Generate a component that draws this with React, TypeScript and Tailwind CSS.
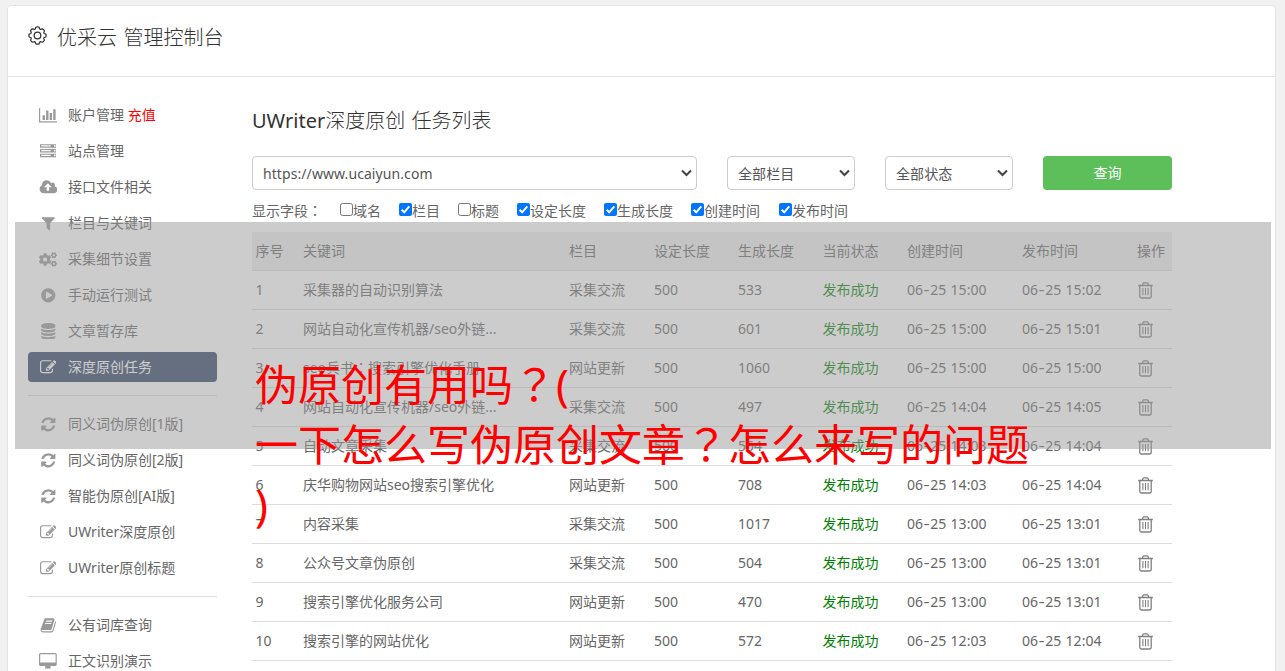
import React from "react";
import { FaCogs } from "react-icons/fa";

type IconDef = { w: number; h?: number; d: string };

const ICONS: Record<string, IconDef> = {
  chart: { w: 2048, d: "M640 896v512h-256v-512h256zm384-512v1024h-256v-1024h256zm1024 1152v128h-2048v-1536h128v1408h1920zm-640-896v768h-256v-768h256zm384-384v1152h-256v-1152h256z" },
  server: { w: 1792, d: "M128 1408h1024v-128h-1024v128zm0-512h1024v-128h-1024v128zm1568 448q0-40-28-68t-68-28-68 28-28 68 28 68 68 28 68-28 28-68zm-1568-960h1024v-128h-1024v128zm1568 448q0-40-28-68t-68-28-68 28-28 68 28 68 68 28 68-28 28-68zm0-512q0-40-28-68t-68-28-68 28-28 68 28 68 68 28 68-28 28-68zm96 832v384h-1792v-384h1792zm0-512v384h-1792v-384h1792zm0-512v384h-1792v-384h1792z" },
  upload: { w: 2048, d: "M1344 864q0-14-9-23l-352-352q-9-9-23-9t-23 9l-351 351q-10 12-10 24 0 14 9 23t23 9h224v352q0 13 9.5 22.5t22.5 9.5h192q13 0 22.5-9.5t9.5-22.5v-352h224q13 0 22.5-9.5t9.5-22.5zm640 288q0 159-112.5 271.5t-271.5 112.5h-1088q-185 0-316.5-131.5t-131.5-316.5q0-130 70-240t188-165q-2-30-2-43 0-212 150-362t362-150q156 0 285.5 87t188.5 231q71-62 166-62 106 0 181 75t75 181q0 76-41 138 130 31 213.5 135.5t83.5 238.5z" },
  filter: { w: 1792, d: "M1595 295q17 41-14 70l-493 493v742q0 42-39 59-13 5-25 5-27 0-45-19l-256-256q-19-19-19-45v-486l-493-493q-31-29-14-70 17-39 59-39h1280q42 0 59 39z" },
  play: { w: 1792, d: "M896 128q209 0 385.5 103t279.5 279.5 103 385.5-103 385.5-279.5 279.5-385.5 103-385.5-103-279.5-279.5-103-385.5 103-385.5 279.5-279.5 385.5-103zm384 823q32-18 32-55t-32-55l-544-320q-31-19-64-1-32 19-32 56v640q0 37 32 56 16 8 32 8 17 0 32-9z" },
  database: { w: 1792, d: "M896 768q237 0 443-43t325-127v170q0 69-103 128t-280 93.5-385 34.5-385-34.5-280-93.5-103-128v-170q119 84 325 127t443 43zm0 768q237 0 443-43t325-127v170q0 69-103 128t-280 93.5-385 34.5-385-34.5-280-93.5-103-128v-170q119 84 325 127t443 43zm0-384q237 0 443-43t325-127v170q0 69-103 128t-280 93.5-385 34.5-385-34.5-280-93.5-103-128v-170q119 84 325 127t443 43zm0-1152q208 0 385 34.5t280 93.5 103 128v128q0 69-103 128t-280 93.5-385 34.5-385-34.5-280-93.5-103-128v-128q0-69 103-128t280-93.5 385-34.5z" },
  edit: { w: 1792, d: "M888 1184l116-116-152-152-116 116v56h96v96h56zm440-720q-16-16-33 1l-350 350q-17 17-1 33t33-1l350-350q17-17 1-33zm80 594v190q0 119-84.5 203.5t-203.5 84.5h-832q-119 0-203.5-84.5t-84.5-203.5v-832q0-119 84.5-203.5t203.5-84.5h832q63 0 117 25 15 7 18 23 3 17-9 29l-49 49q-14 14-32 8-23-6-45-6h-832q-66 0-113 47t-47 113v832q0 66 47 113t113 47h832q66 0 113-47t47-113v-126q0-13 9-22l64-64q15-15 35-7t20 29zm-96-738l288 288-672 672h-288v-288zm444 132l-92 92-288-288 92-92q28-28 68-28t68 28l152 152q28 28 28 68t-28 68z" },
  refresh: { w: 1792, d: "M1639 1056q0 5-1 7-64 268-268 434.5t-478 166.5q-146 0-282.5-55t-243.5-157l-129 129q-19 19-45 19t-45-19-19-45v-448q0-26 19-45t45-19h448q26 0 45 19t19 45-19 45l-137 137q71 66 161 102t187 36q134 0 250-65t186-179q11-17 53-117 8-23 30-23h192q13 0 22.5 9.5t9.5 22.5zm25-800v448q0 26-19 45t-45 19h-448q-26 0-45-19t-19-45 19-45l138-138q-148-137-349-137-134 0-250 65t-186 179q-11 17-53 117-8 23-30 23h-199q-13 0-22.5-9.5t-9.5-22.5v-7q65-268 270-434.5t480-166.5q146 0 284 55.5t245 156.5l130-129q19-19 45-19t45 19 19 45z" },
  book: { w: 1792, d: "M1703 478q40 57 18 129l-275 906q-19 64-76.5 107.5t-122.5 43.5h-923q-77 0-148.5-53.5t-99.5-131.5q-24-67-2-127 0-4 3-27t4-37q1-8-3-21.5t-3-19.5q2-11 8-21t16.5-23.5 16.5-23.5q23-38 45-91.5t30-91.5q3-10 .5-30t-.5-28q3-11 17-28t17-23q21-36 42-92t25-90q1-9-2.5-32t.5-28q4-13 22-30.5t22-22.5q19-26 42.5-84.5t27.5-96.5q1-8-3-25.5t-2-26.5q2-8 9-18t18-23 17-21q8-12 16.5-30.5t15-35 16-36 19.5-32 26.5-23.5 36-11.5 47.5 5.5l-1 3q38-9 51-9h761q74 0 114 56t18 130l-274 906q-36 119-71.5 153.5t-128.5 34.5h-869q-27 0-38 15-11 16-1 43 24 70 144 70h923q29 0 56-15.5t35-41.5l300-987q7-22 5-57 38 15 59 43zm-1064 2q-4 13 2 22.5t20 9.5h608q13 0 25.5-9.5t16.5-22.5l21-64q4-13-2-22.5t-20-9.5h-608q-13 0-25.5 9.5t-16.5 22.5zm-83 256q-4 13 2 22.5t20 9.5h608q13 0 25.5-9.5t16.5-22.5l21-64q4-13-2-22.5t-20-9.5h-608q-13 0-25.5 9.5t-16.5 22.5z" },
  desktop: { w: 1920, d: "M1792 992v-832q0-13-9.5-22.5t-22.5-9.5h-1600q-13 0-22.5 9.5t-9.5 22.5v832q0 13 9.5 22.5t22.5 9.5h1600q13 0 22.5-9.5t9.5-22.5zm128-832v1088q0 66-47 113t-113 47h-544q0 37 16 77.5t32 71 16 43.5q0 26-19 45t-45 19h-512q-26 0-45-19t-19-45q0-14 16-44t32-70 16-78h-544q-66 0-113-47t-47-113v-1088q0-66 47-113t113-47h1600q66 0 113 47t47 113z" },
};

function NavIcon({ name }: { name: string }) {
  if (name === "cogs") return <FaCogs className="h-[17px] w-[18px]" />;
  const i = ICONS[name];
  return (
    <svg viewBox={`0 0 ${i.w} 1792`} width={i.w / 108} height={1792 / 108} fill="currentColor" className="shrink-0">
      <path d={i.d} />
    </svg>
  );
}

type NavItem = { icon: string; label: string; extra?: string; active?: boolean };

const NAV: NavItem[][] = [
  [
    { icon: "chart", label: "账户管理", extra: "充值" },
    { icon: "server", label: "站点管理" },
    { icon: "upload", label: "接口文件相关" },
    { icon: "filter", label: "栏目与关键词" },
    { icon: "cogs", label: "采集细节设置" },
    { icon: "play", label: "手动运行测试" },
    { icon: "database", label: "文章暂存库" },
    { icon: "edit", label: "深度原创任务", active: true },
  ],
  [
    { icon: "refresh", label: "同义词伪原创[1版]" },
    { icon: "refresh", label: "同义词伪原创[2版]" },
    { icon: "refresh", label: "智能伪原创[AI版]" },
    { icon: "edit", label: "UWriter深度原创" },
    { icon: "edit", label: "UWriter原创标题" },
  ],
  [
    { icon: "book", label: "公有词库查询" },
    { icon: "desktop", label: "正文识别演示" },
  ],
];

function Sidebar() {
  return (
    <nav className="mt-[20px] w-[189px] shrink-0">
      {NAV.map((group, g) => (
        <div key={g} className={g > 0 ? "mt-[10px] border-t border-[#ddd] pt-[10px]" : ""}>
          {group.map((n) => (
            <div key={n.label} className="flex h-9 items-center">
              <div className={`flex h-[30px] w-full items-center rounded-[4px] ${n.active ? "bg-[#334565] text-white" : "text-[#666]"}`}>
                <span className={`flex w-[40px] justify-center ${n.active ? "text-white" : "text-[#999]"}`}>
                  <NavIcon name={n.icon} />
                </span>
                <span className="whitespace-pre">
                  {n.label}
                  {n.extra && <span className="text-[#f00]"> {n.extra}</span>}
                </span>
              </div>
            </div>
          ))}
        </div>
      ))}
    </nav>
  );
}

function Select({ label, className }: { label: string; className: string }) {
  return (
    <div className={`flex h-[34px] items-center justify-between rounded-[4px] border border-[#ccc] bg-white pl-[10px] pr-[4px] text-[#555] ${className}`}>
      <span className="pt-px tracking-[0.08px]">{label}</span>
      <svg width="11" height="8" viewBox="0 0 11 8" fill="none" stroke="#444" strokeWidth="2">
        <path d="M1 1.5L5.5 6L10 1.5" />
      </svg>
    </div>
  );
}

const FIELDS: [string, boolean, string][] = [
  ["域名", false, "w-[59px]"],
  ["栏目", true, "w-[59px]"],
  ["标题", false, "w-[59px]"],
  ["设定长度", true, "w-[87px]"],
  ["生成长度", true, "w-[87px]"],
  ["创建时间", true, "w-[88px]"],
  ["发布时间", true, "w-[87px]"],
];

function Check({ on }: { on: boolean }) {
  return (
    <svg width="13" height="13" viewBox="0 0 13 13" className="mb-[3px] shrink-0">
      {on ? (
        <>
          <rect width="13" height="13" rx="2" fill="#0075ff" />
          <path d="M2.6 6.8L5.2 9.3L10.3 3.4" fill="none" stroke="#fff" strokeWidth="2" />
        </>
      ) : (
        <rect x="0.5" y="0.5" width="12" height="12" rx="2" fill="#fff" stroke="#767676" />
      )}
    </svg>
  );
}

const HEAD = ["序号", "关键词", "栏目", "设定长度", "生成长度", "当前状态", "创建时间", "发布时间", "操作"];

const ROWS: string[][] = [
  ["采集器的自动识别算法", "采集交流", "533", "15:00", "15:02"],
  ["网站自动化宣传机器/seo外链...", "采集交流", "601", "15:00", "15:01"],
  ["seo兵书：搜索引擎优化手册", "网站更新", "1060", "15:00", "15:00"],
  ["网站自动化宣传机器/seo外链...", "采集交流", "497", "14:04", "14:05"],
  ["自动文章采集", "采集交流", "554", "14:03", "14:04"],
  ["庆华购物网站seo搜索引擎优化", "网站更新", "708", "14:03", "14:04"],
  ["内容采集", "采集交流", "1017", "13:00", "13:01"],
  ["公众号文章伪原创", "采集交流", "504", "13:00", "13:01"],
  ["搜索引擎优化服务公司", "网站更新", "470", "13:00", "13:01"],
  ["搜索引擎的网站优化", "网站更新", "572", "12:03", "12:04"],
];

const GRID = "grid h-[39px] grid-cols-[47.5px_266px_85px_84px_84.5px_84.5px_115px_115px_35px] items-center border-b border-[#ddd] pl-[3.5px] whitespace-nowrap";

/* Full-width punctuation centred in its cell */
function Punct({ children }: { children: string }) {
  return (
    <span lang="zh-TW" className="font-['Noto_Sans_CJK_TC',sans-serif] leading-none">
      {children}
    </span>
  );
}

function Keyword({ text }: { text: string }) {
  const [a, b] = text.split("：");
  return (
    <span>
      {a}
      {b && <Punct>：</Punct>}
      {b}
    </span>
  );
}

function Stamp({ time }: { time: string }) {
  return (
    <span className="[word-spacing:0.8px]">
      06<span className="inline-block origin-center scale-x-[1.35] px-[1.3px]">-</span>25 {time}
    </span>
  );
}

function Trash() {
  return (
    <svg width="15" height="17" viewBox="0 0 15 17" fill="none" stroke="#808080" strokeWidth="1.3" className="ml-px">
      <path d="M0.2 3.5H14.8M4.3 3.3L5 1.4Q5.2 0.9 5.8 0.9H9.2Q9.8 0.9 10 1.4L10.7 3.3M1.8 3.6V14.6Q1.8 16 3.2 16H11.8Q13.2 16 13.2 14.6V3.6" />
      <path d="M4.9 6V13.2M7.5 6V13.2M10.1 6V13.2" strokeWidth="1.1" />
    </svg>
  );
}

function Gear() {
  return (
    <svg width="19" height="19" viewBox="0 0 19 19" fill="none" stroke="#333" strokeWidth="1.25" strokeLinejoin="round">
      <path d="M7.8 1.2Q9.5 .4 11.2 1.2L11.6 2.9Q12.3 3.5 13.2 3.1L14.6 2.8Q16 3.6 16.4 5L15.9 6.2Q15.6 7.1 16.3 7.5L17.8 8.1Q18.4 9.5 17.8 11L16.3 11.5Q15.6 12 15.9 12.9L16.4 14.1Q15.9 15.6 14.5 16.2L13.2 15.9Q12.3 15.5 11.7 16.2L11.2 17.8Q9.5 18.4 7.8 17.8L7.3 16.2Q6.7 15.5 5.8 15.9L4.5 16.2Q3.1 15.6 2.6 14.1L3.1 12.9Q3.4 12 2.7 11.5L1.2 11Q.6 9.5 1.2 8.1L2.7 7.5Q3.4 7.1 3.1 6.2L2.6 5Q3 3.6 4.4 2.8L5.8 3.1Q6.7 3.5 7.4 2.9Z" />
      <circle cx="9.5" cy="9.5" r="3.3" />
    </svg>
  );
}

export default function App() {
  return (
    <div className="relative h-[671px] w-[1285px] overflow-hidden bg-[#f1f1f1] pl-[7px] pt-[5px] font-['Noto_Sans','Noto_Sans_CJK_SC',sans-serif] text-[14px] leading-5 text-[#666]">
      <div className="h-[700px] w-[1269px] rounded-[4px] border border-[#e4e4e4] bg-white">
        <header className="flex h-[71px] items-start border-b border-[#e4e4e4] pl-5 pt-[20px] text-[#333]">
          <Gear />
          <h1 className="ml-[10px] mt-[2px] text-[20px] font-light leading-[20px] [word-spacing:1.2px]">优采云 管理控制台</h1>
        </header>
        <div className="flex pl-5">
          <Sidebar />
          <main className="ml-[35px] w-[920px]">
            <h2 className="mt-[29px] text-[20px] font-light leading-[30px] text-[#333] [word-spacing:1.2px]">
              <span className="font-normal">UWriter</span>深度原创 任务列表
            </h2>
            <div className="mt-[20px] flex">
              <Select label="https://www.ucaiyun.com" className="w-[445px]" />
              <Select label="全部栏目" className="ml-[30px] w-[128px]" />
              <Select label="全部状态" className="ml-[30px] w-[128px]" />
              <button className="ml-[30px] h-[34px] w-[129px] rounded-[4px] bg-[#5cbf5a] text-white">查询</button>
            </div>
            <div className="mt-[11px] flex h-5 items-center">
              <span className="w-[88px]">显示字段<Punct>：</Punct></span>
              {FIELDS.map(([label, on, w]) => (
                <label key={label} className={`flex items-center whitespace-nowrap ${w}`}>
                  <Check on={on} />
                  {label}
                </label>
              ))}
            </div>
            <div className="mt-[11px]">
              <div className={`${GRID} bg-[#eee]`}>
                {HEAD.map((h) => (
                  <span key={h}>{h}</span>
                ))}
              </div>
              {ROWS.map((r, i) => (
                <div key={i} className={GRID}>
                  <span>{i + 1}</span>
                  <Keyword text={r[0]} />
                  <span>{r[1]}</span>
                  <span>500</span>
                  <span>{r[2]}</span>
                  <span className="text-[#008000]">发布成功</span>
                  <Stamp time={r[3]} />
                  <Stamp time={r[4]} />
                  <Trash />
                </div>
              ))}
            </div>
          </main>
        </div>
      </div>
      <div className="absolute left-[15px] top-[222px] h-[227px] w-[1256px] bg-[#999]/50" />
      <div className="absolute left-[255px] top-[355px] whitespace-nowrap text-[43px] leading-[60px] text-[#f00]">
        <div className="h-[60px]">伪原创有用吗<Punct>？</Punct>(</div>
        <div className="h-[60px]">一下怎么写伪原创文章<Punct>？</Punct>怎么来写的问题</div>
        <div className="h-[60px]">)</div>
      </div>
    </div>
  );
}
